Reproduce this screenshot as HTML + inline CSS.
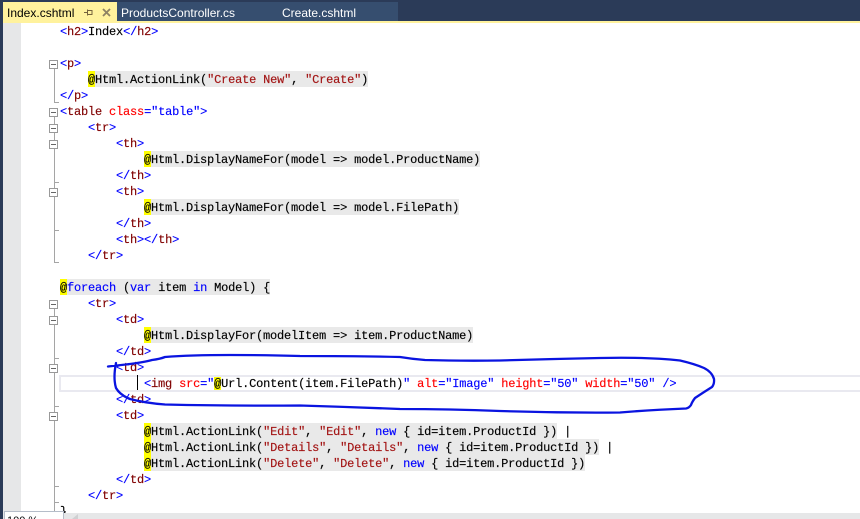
<!DOCTYPE html>
<html><head><meta charset="utf-8"><style>
html,body{margin:0;padding:0;background:#fff}
#r{position:relative;z-index:0;width:860px;height:519px;overflow:hidden;background:#fff}
.a{position:absolute}
pre{position:absolute;left:60px;margin:0;height:16px;font:12px/16px "Liberation Mono",monospace;letter-spacing:-.2px;color:#000;white-space:pre;-webkit-text-stroke:.15px}
i{font-style:normal;color:#00f}u{text-decoration:none;color:#800000}
b{font-weight:normal;color:#f00}s{text-decoration:none;color:#a31515}
em,.g{font-style:normal;position:relative}
em:before,.g:before{content:"";position:absolute;left:0;right:0;top:-2px;height:16px;z-index:-1}
em:before{background:#ff0}
.g:before{background:#e9e9e9}
.f{position:absolute;left:49px;width:7px;height:7px;border:1px solid #999;background:#fff}
.f:after{content:"";position:absolute;left:1px;top:3px;width:5px;height:1px;background:#666}
.t{position:absolute;left:54px;width:5px;height:1px;background:#a5a5a5}
.tab{position:absolute;top:4px;font:12px/18px "Liberation Sans",sans-serif;white-space:pre}
</style></head><body><div id="r">
<div class="a" style="left:0;top:0;width:860px;height:21px;background:#2b3b58"></div>
<div class="a" style="left:117px;top:2px;width:281px;height:19px;background:#364e6f"></div>
<div class="a" style="left:3px;top:2px;width:114px;height:19px;background:#fff29d"></div>
<div class="a" style="left:0;top:21px;width:860px;height:2px;background:#fff29d"></div>
<div class="a" style="left:0;top:0;width:3px;height:519px;background:#2b3b58"></div>
<div class="a" style="left:3px;top:23px;width:18px;height:490px;background:#e6e7e8"></div>
<div class="tab" style="left:7px;color:#000">Index.cshtml</div>
<div class="tab" style="left:121px;color:#fff">ProductsController.cs</div>
<div class="tab" style="left:282px;color:#fff">Create.cshtml</div>
<svg class="a" style="left:84px;top:8px" width="28" height="11" fill="none">
<path d="M0 4.500h3M3.500 1.500v6M3.500 2.500h4.500v4h-4.500" stroke="#75633d"/>
<path d="M19 1l7 7M26 1l-7 7" stroke="#8d8263" stroke-width="1.800"/></svg>

<div class="a" style="left:54px;top:68px;width:1px;height:34px;background:#a5a5a5"></div>
<div class="a" style="left:54px;top:116px;width:1px;height:146px;background:#a5a5a5"></div>
<div class="a" style="left:54px;top:308px;width:1px;height:205px;background:#a5a5a5"></div>
<div class="t" style="top:102px"></div><div class="t" style="top:182px"></div><div class="t" style="top:230px"></div><div class="t" style="top:262px"></div><div class="t" style="top:358px"></div><div class="t" style="top:406px"></div><div class="t" style="top:486px"></div><div class="t" style="top:502px"></div>
<div class="f" style="top:60px"></div><div class="f" style="top:108px"></div><div class="f" style="top:124px"></div><div class="f" style="top:140px"></div><div class="f" style="top:188px"></div><div class="f" style="top:300px"></div><div class="f" style="top:316px"></div><div class="f" style="top:364px"></div><div class="f" style="top:412px"></div>

<div class="a" style="left:59px;top:375px;width:801px;height:13px;border:2px solid #e9e9f0;border-right:0"></div>
<div class="a" style="left:137px;top:375px;width:1px;height:15px;background:#000"></div>

<pre style="top:24px"><i>&lt;</i><u>h2</u><i>&gt;</i>Index<i>&lt;/</i><u>h2</u><i>&gt;</i></pre>
<pre style="top:56px"><i>&lt;</i><u>p</u><i>&gt;</i></pre>
<pre style="top:72px">    <span class="g"><em>@</em>Html.ActionLink(<s>"Create New"</s>, <s>"Create"</s>)</span></pre>
<pre style="top:88px"><i>&lt;/</i><u>p</u><i>&gt;</i></pre>
<pre style="top:104px"><i>&lt;</i><u>table</u> <b>class</b><i>="table"&gt;</i></pre>
<pre style="top:120px">    <i>&lt;</i><u>tr</u><i>&gt;</i></pre>
<pre style="top:136px">        <i>&lt;</i><u>th</u><i>&gt;</i></pre>
<pre style="top:152px">            <span class="g"><em>@</em>Html.DisplayNameFor(model =&gt; model.ProductName)</span></pre>
<pre style="top:168px">        <i>&lt;/</i><u>th</u><i>&gt;</i></pre>
<pre style="top:184px">        <i>&lt;</i><u>th</u><i>&gt;</i></pre>
<pre style="top:200px">            <span class="g"><em>@</em>Html.DisplayNameFor(model =&gt; model.FilePath)</span></pre>
<pre style="top:216px">        <i>&lt;/</i><u>th</u><i>&gt;</i></pre>
<pre style="top:232px">        <i>&lt;</i><u>th</u><i>&gt;&lt;/</i><u>th</u><i>&gt;</i></pre>
<pre style="top:248px">    <i>&lt;/</i><u>tr</u><i>&gt;</i></pre>
<pre style="top:280px"><span class="g"><em>@</em><i>foreach</i> (<i>var</i> item <i>in</i> Model) {</span></pre>
<pre style="top:296px">    <i>&lt;</i><u>tr</u><i>&gt;</i></pre>
<pre style="top:312px">        <i>&lt;</i><u>td</u><i>&gt;</i></pre>
<pre style="top:328px">            <span class="g"><em>@</em>Html.DisplayFor(modelItem =&gt; item.ProductName)</span></pre>
<pre style="top:344px">        <i>&lt;/</i><u>td</u><i>&gt;</i></pre>
<pre style="top:360px">        <i>&lt;</i><u>td</u><i>&gt;</i></pre>
<pre style="top:376px">            <i>&lt;</i><u>img</u> <b>src</b><i>="</i><em>@</em>Url.Content(item.FilePath)<i>"</i> <b>alt</b><i>="Image"</i> <b>height</b><i>="50"</i> <b>width</b><i>="50"</i> <i>/&gt;</i></pre>
<pre style="top:392px">        <i>&lt;/</i><u>td</u><i>&gt;</i></pre>
<pre style="top:408px">        <i>&lt;</i><u>td</u><i>&gt;</i></pre>
<pre style="top:424px">            <span class="g"><em>@</em>Html.ActionLink(<s>"Edit"</s>, <s>"Edit"</s>, <i>new</i> { id=item.ProductId })</span> |</pre>
<pre style="top:440px">            <span class="g"><em>@</em>Html.ActionLink(<s>"Details"</s>, <s>"Details"</s>, <i>new</i> { id=item.ProductId })</span> |</pre>
<pre style="top:456px">            <span class="g"><em>@</em>Html.ActionLink(<s>"Delete"</s>, <s>"Delete"</s>, <i>new</i> { id=item.ProductId })</span></pre>
<pre style="top:472px">        <i>&lt;/</i><u>td</u><i>&gt;</i></pre>
<pre style="top:488px">    <i>&lt;/</i><u>tr</u><i>&gt;</i></pre>
<pre style="top:504px">}</pre>

<svg class="a" style="left:0;top:0" width="860" height="519" fill="none">
<path d="M108 366.500L130 364Q145 362 152 360Q160 359 165 357Q190 355 230 355Q270 355 300 356Q360 356 400 357Q412 359 425 360Q460 361 500 360.500Q550 359 600 358Q650 357 680 360.500Q695 364 704 368Q712 372 714 379Q714.500 384 712 387Q704 392 695 398Q692 402 691 405Q689 408 686 408.500Q650 410 620 412.500Q560 413 500 411Q450 409 400 409Q350 407 300 405.500Q230 406 165 404.500Q145 403 130 399Q120 395 116 388Q113 378 116 363" stroke="#0a14e0" stroke-width="2.300" stroke-linejoin="round" stroke-linecap="round"/>
</svg>

<div class="a" style="left:3px;top:513px;width:857px;height:6px;background:#e6e7e8"></div>
<svg class="a" style="left:72px;top:514px" width="6" height="5"><path d="M6 0v5H0z" fill="#cfd0d2"/></svg>
<div class="a" style="left:4px;top:511px;width:58px;height:8px;background:#fff;border:1px solid #b5bdc9;border-bottom:0;font:11px/13px 'Liberation Sans',sans-serif;color:#000;text-indent:2px;overflow:hidden"><span style="position:relative;top:3px">100 %</span></div>
</div></body></html>
